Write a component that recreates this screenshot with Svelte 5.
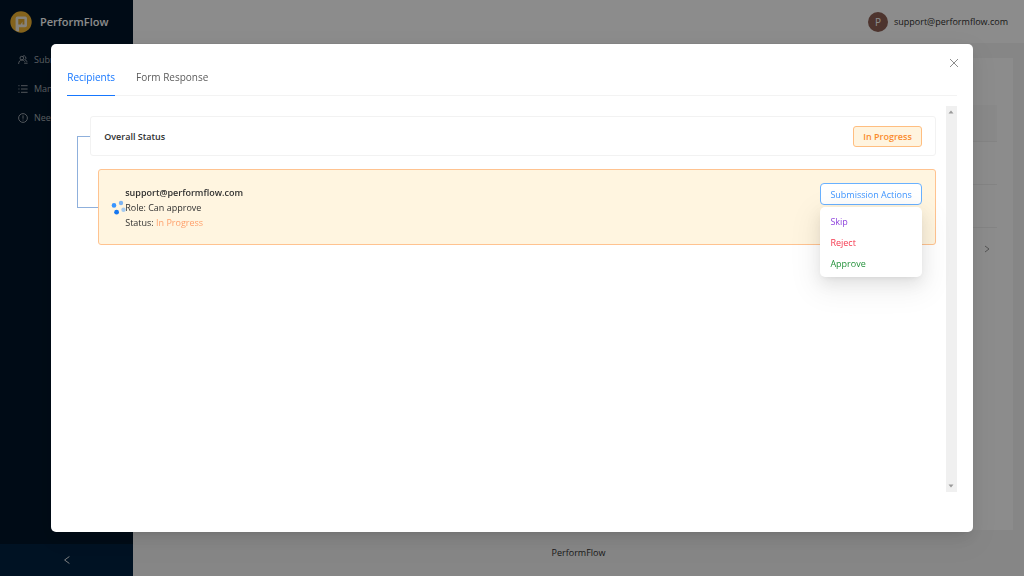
<script>
	const menu = [
		{ icon: 'team', label: 'Submissions' },
		{ icon: 'list', label: 'Manage' },
		{ icon: 'info', label: 'Need Help' }
	];
	const tabs = ['Recipients', 'Form Response'];
	const actions = [
		{ label: 'Skip', kind: 'skip' },
		{ label: 'Reject', kind: 'reject' },
		{ label: 'Approve', kind: 'approve' }
	];

	let activeTab = $state('Recipients');
	let menuOpen = $state(true);
</script>

<div class="layout">
	<aside>
		<div class="brand">
			<svg class="logo" viewBox="0 0 22 22" aria-hidden="true">
				<circle cx="11" cy="11" r="10.7" fill="#f0b433" />
				<path d="M5.6 19.6V7.2Q5.6 5.4 7.4 5.4H15.2Q17 5.4 17 7.2V14.4Q17 16.2 15.2 16.2H9V20.6Q7 20.4 5.6 19.6Z" fill="#f4efe2" />
				<path d="M8.3 8H14.4V13.6H12.5V10.6L10.7 13.6H8.3Z" fill="#e3a92c" />
			</svg>
			<span>PerformFlow</span>
		</div>
		<nav>
			{#each menu as item}
				<a href="#{item.icon}">
					<svg viewBox="0 0 10 10" aria-hidden="true">
						{#if item.icon === 'team'}
							<circle cx="3.8" cy="3.1" r="1.8" />
							<path d="M.6 8.9C.8 6.4 2 5 3.8 5S6.2 5.7 6.7 6.6M5 1.1A1.9 1.9 0 1 1 6.8 4.6C8 5 8.7 5.8 9 6.8M6.2 8.2H9.6" />
						{:else if item.icon === 'list'}
							<path d="M3 1.7H9.6M3 5H9.6M3 8.3H9.6M.4 1.7H1.5M.4 5H1.5M.4 8.3H1.5" />
						{:else}
							<circle cx="5" cy="5" r="4.4" />
							<path d="M5 2.4V5.7M5 6.6V7.5" />
						{/if}
					</svg>
					{item.label}
				</a>
			{/each}
		</nav>
		<button class="collapse" aria-label="Collapse sidebar">
			<svg viewBox="0 0 10 10" aria-hidden="true"><path d="M7.4 1.5L2.6 5L7.4 8.5" /></svg>
		</button>
	</aside>

	<div class="page">
		<header>
			<span class="avatar">P</span>
			<span>support@performflow.com</span>
		</header>
		<main>
			<div class="thead"></div>
			<div class="row"></div>
			<div class="row"></div>
			<button class="next" aria-label="Next page">
				<svg viewBox="0 0 10 10" aria-hidden="true"><path d="M3 2L7 5L3 8" /></svg>
			</button>
		</main>
		<footer>PerformFlow</footer>
	</div>
</div>

<div class="mask">
	<div class="modal" role="dialog" aria-modal="true" aria-label="Recipients">
		<button class="close" aria-label="Close">
			<svg viewBox="0 0 10 10" aria-hidden="true"><path d="M1 1L9 9M9 1L1 9" /></svg>
		</button>
		<div class="tabs" role="tablist">
			{#each tabs as tab}
				<button
					role="tab"
					aria-selected={activeTab === tab}
					class:active={activeTab === tab}
					onclick={() => (activeTab = tab)}>{tab}</button
				>
			{/each}
		</div>

		<div class="scroll">
			<div class="list">
				<div class="connector"></div>
				<section class="overall">
					<strong>Overall Status</strong>
					<span class="tag">In Progress</span>
				</section>
				<section class="recipient">
					<svg class="spinner" viewBox="0 0 16 16" aria-hidden="true">
						<circle cx="3" cy="5.4" r="2.3" fill="#3895ff" />
						<circle cx="10" cy="3" r="2.2" fill="#7db4f2" />
						<circle cx="5.6" cy="12.2" r="2.4" fill="#1677f0" />
						<circle cx="12.5" cy="9.7" r="2.2" fill="#a5caef" />
					</svg>
					<div class="info">
						<strong>support@performflow.com</strong>
						<span>Role: Can approve</span>
						<span>Status: <em>In Progress</em></span>
					</div>
					<div class="dropdown">
						<button class="trigger" aria-expanded={menuOpen} onclick={() => (menuOpen = !menuOpen)}>
							Submission Actions
						</button>
						{#if menuOpen}
							<div class="options" role="menu">
								{#each actions as action}
									<button role="menuitem" class={action.kind}>{action.label}</button>
								{/each}
							</div>
						{/if}
					</div>
				</section>
			</div>
			<div class="bar">
				<svg viewBox="0 0 6 4" aria-hidden="true"><path d="M3 .5L5.5 3.5H.5Z" /></svg>
				<svg viewBox="0 0 6 4" aria-hidden="true"><path d="M.5 .5H5.5L3 3.5Z" /></svg>
			</div>
		</div>
	</div>
</div>

<style>
	:global(body) {
		margin: 0;
		font-family: 'Open Sans', 'Noto Sans', sans-serif;
		font-size: 9px;
		line-height: 15px;
		color: #303030;
	}
	button {
		font: inherit;
		margin: 0;
		padding: 0;
		border: 0;
		background: none;
		color: inherit;
		cursor: pointer;
	}
	svg {
		display: block;
	}
	nav svg,
	.collapse svg,
	.next svg,
	.close svg {
		width: 10px;
		height: 10px;
		fill: none;
		stroke: currentColor;
		stroke-width: 0.9;
	}

	.layout {
		display: flex;
		min-height: 100vh;
	}
	aside {
		width: 13%;
		display: flex;
		flex-direction: column;
		background: #001529;
		color: #a6adb4;
	}
	.brand {
		display: flex;
		align-items: center;
		gap: 8px;
		height: 43px;
		padding-left: 10px;
		color: #fff;
		font-size: 11px;
		font-weight: 600;
	}
	.logo {
		width: 22px;
		height: 22px;
	}
	nav {
		flex: 1;
		padding-top: 2px;
	}
	nav a {
		display: flex;
		align-items: center;
		gap: 6px;
		height: 29px;
		padding-left: 18px;
		color: inherit;
		text-decoration: none;
		white-space: nowrap;
		overflow: hidden;
	}
	.collapse {
		display: flex;
		align-items: center;
		justify-content: center;
		height: 32px;
		background: #002140;
		color: #fff;
	}
	.page {
		flex: 1;
		display: flex;
		flex-direction: column;
		background: #f5f5f5;
	}
	header {
		display: flex;
		align-items: center;
		justify-content: flex-end;
		gap: 6px;
		height: 43px;
		padding-right: 16px;
		background: #fff;
	}
	.avatar {
		width: 20px;
		height: 20px;
		border-radius: 50%;
		background: #8d5f54;
		color: #fff;
		font-size: 10px;
		line-height: 20px;
		text-align: center;
	}
	main {
		flex: 1;
		margin: 15px 11px 0;
		padding: 47px 16px 0;
		background: #fff;
		display: flex;
		flex-direction: column;
	}
	.thead {
		height: 36px;
		background: #fafafa;
		border-bottom: 1px solid #f0f0f0;
	}
	.row {
		height: 42px;
		border-bottom: 1px solid #f0f0f0;
	}
	.next {
		align-self: flex-end;
		margin-top: 16px;
		padding: 0 5px;
		color: #8c8c8c;
	}
	footer {
		height: 46px;
		line-height: 46px;
		text-align: center;
	}

	.mask {
		position: fixed;
		inset: 0;
		display: flex;
		align-items: center;
		justify-content: center;
		background: rgba(0, 0, 0, 0.45);
	}
	.modal {
		position: relative;
		box-sizing: border-box;
		width: 90%;
		padding: 16px 16px 40px;
		border-radius: 5px;
		background: #fff;
		box-shadow:
			0 6px 16px rgba(0, 0, 0, 0.08),
			0 3px 6px -4px rgba(0, 0, 0, 0.12),
			0 9px 28px 8px rgba(0, 0, 0, 0.05);
	}
	.close {
		position: absolute;
		top: 14px;
		right: 14px;
		color: #808080;
	}
	.tabs {
		display: flex;
		gap: 21px;
		border-bottom: 1px solid #f3f3f3;
		color: #5c5c5c;
		font-size: 10px;
	}
	.tabs button {
		height: 36px;
		margin-bottom: -1px;
		border-bottom: 1px solid transparent;
	}
	.tabs .active {
		border-color: #1677ff;
		color: #1677ff;
	}
	.scroll {
		display: flex;
		height: 67vh;
		margin-top: 10px;
	}
	.list {
		position: relative;
		flex: 1;
		padding: 10px 10px 0 23px;
	}
	.connector {
		position: absolute;
		top: 30px;
		left: 10px;
		width: 20px;
		height: 70px;
		border: 1px solid #8fb0dc;
		border-right: 0;
	}
	section {
		box-sizing: border-box;
		display: flex;
		border: 1px solid #f2f2f2;
		border-radius: 3px;
	}
	strong {
		font-weight: 600;
	}
	.overall {
		position: relative;
		align-items: center;
		justify-content: space-between;
		height: 40px;
		padding: 0 13px;
		background: #fff;
	}
	.tag {
		padding: 2px 9px;
		border: 1px solid #ffbe80;
		border-radius: 3px;
		background: #fff4df;
		color: #fa8c2e;
		font-weight: 600;
	}
	.recipient {
		position: relative;
		height: 76px;
		margin: 13px 0 0 8px;
		padding: 13px;
		border-color: #ffc390;
		background: #fff5e0;
	}
	.spinner {
		width: 16px;
		height: 16px;
		margin: 17px -2px 0 -1px;
	}
	.info {
		flex: 1;
		display: flex;
		flex-direction: column;
		padding-top: 2px;
	}
	em {
		font-style: normal;
		color: #ffa06b;
	}
	.dropdown {
		position: relative;
	}
	.trigger {
		height: 22px;
		padding: 0 9px;
		border: 1px solid #69b1ff;
		border-radius: 4px;
		background: #fff;
		color: #4096ff;
	}
	.options {
		position: absolute;
		top: 24px;
		left: 0;
		right: 0;
		display: flex;
		flex-direction: column;
		padding: 4px 2px 3px;
		border-radius: 5px;
		background: #fff;
		box-shadow:
			0 6px 16px rgba(0, 0, 0, 0.08),
			0 3px 6px -4px rgba(0, 0, 0, 0.12),
			0 9px 28px 8px rgba(0, 0, 0, 0.05);
	}
	.options button {
		height: 21px;
		padding: 0 8px;
		text-align: left;
	}
	.skip {
		color: #8f45dd;
	}
	.reject {
		color: #f5364c;
	}
	.approve {
		color: #23913a;
	}
	.bar {
		display: flex;
		flex-direction: column;
		align-items: center;
		justify-content: space-between;
		box-sizing: border-box;
		width: 11px;
		padding: 4px 0;
		background: #f0f0f0;
	}
	.bar svg {
		width: 6px;
		height: 4px;
		fill: #9a9a9a;
	}
</style>
